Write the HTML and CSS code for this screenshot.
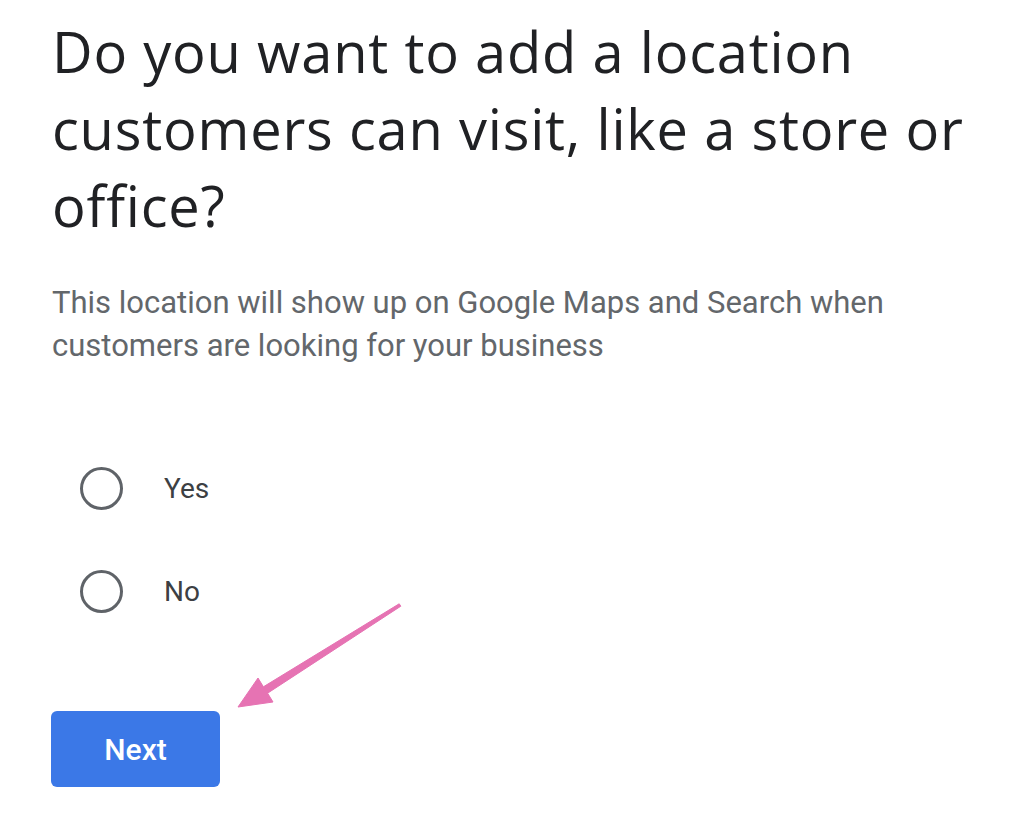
FILE: index.html
```html
<!DOCTYPE html>
<html lang="en">
<head>
    <meta charset="UTF-8">
    <meta name="viewport" content="width=device-width, initial-scale=1.0">
    <title>Add a location</title>
    <link rel="stylesheet" href="styles.css">
</head>
<body>
<div class="container">
    <h1>Do you want to add a location customers can visit, like a store or office?</h1>
    <p class="hint">This location will show up on Google Maps and Search when customers are looking for your business</p>

    <div class="options">
        <label class="option"><span class="radio"></span>Yes</label>
        <label class="option"><span class="radio"></span>No</label>
    </div>

    <button class="next">Next</button>

    <svg class="arrow" width="190" height="130" viewBox="0 0 190 130">
        <polygon points="169.2,13.8 33.4,96.8 28,88 8,117 43,112 37.6,103.2 170.8,16.2" fill="#e673b3" stroke="#e673b3" stroke-width="1" stroke-linejoin="round"/>
    </svg>
</div>
</body>
</html>
```

FILE: styles.css
```css
body { margin: 0; background: #fff; font-family: Roboto, Arial, sans-serif; }
.container { position: relative; padding: 13px 40px 0 52px; }
h1 { font-family: "Open Sans", Arial, sans-serif; font-weight: 400; font-size: 56px; line-height: 77px; letter-spacing: 0.8px; color: #202124; margin: 0; max-width: 930px; }
.hint { font-size: 31px; line-height: 43px; color: #63676b; margin: 37px 0 0; max-width: 870px; }
.options { margin-top: 100px; display: flex; flex-direction: column; gap: 60px; }
.option { display: flex; align-items: center; gap: 41px; height: 43px; padding-left: 28px; font-size: 28px; color: #3c4043; }
.radio { box-sizing: border-box; width: 43px; height: 43px; border: 3.5px solid #5f6368; border-radius: 50%; }
.next { display: block; margin: 98px 0 0 -1px; width: 169px; height: 76px; border: 0; border-radius: 6px; background: #3b78e7; color: #fff; font-family: Roboto, Arial, sans-serif; font-size: 30px; font-weight: 500; }
.arrow { position: absolute; left: 230px; top: 590px; }
```
